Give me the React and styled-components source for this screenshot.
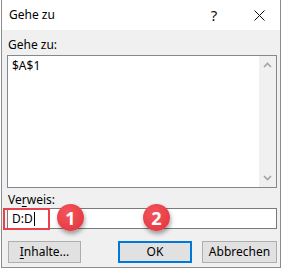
import React from 'react';
import styled, { createGlobalStyle } from 'styled-components';

const Global = createGlobalStyle`
  html, body { margin: 0; padding: 0; background: #ffffff; }
  body { font-family: "Segoe UI", "Noto Sans", "Open Sans", sans-serif; font-size: 12px; color: #000; }
`;

const Window = styled.div`
  position: relative;
  margin-left: 1px;
  width: 278px; height: 267px;
  border: 1px solid #8c8c8c; border-top: none;
  background: #f0f0f0;
  display: flex; flex-direction: column;
`;

const TitleBar = styled.div`
  height: 30px; background: #fff;
  display: flex; align-items: center;
  padding-left: 7px;
  font-size: 12px;
`;

const Title = styled.div`flex: 1; padding-bottom: 2px;`;

const TitleBtn = styled.div`
  width: ${p => p.$w}px; height: 30px;
  display: flex; align-items: center; justify-content: center;
  font-size: 15px; color: #111;
`;

const Body = styled.div`
  flex: 1;
  padding: 7px 3px 0 5px;
  display: flex; flex-direction: column;
`;

const Label = styled.div`
  margin-left: 1px;
  line-height: 16px;
  margin-bottom: ${p => p.$mb || 0}px;
  margin-top: ${p => p.$mt || 0}px;
`;

const Key = styled.span`text-decoration: underline; text-underline-offset: 2px;`;

const ListBox = styled.div`
  height: 131px;
  border: 1px solid #828790;
  background: #fff;
  display: flex;
`;

const ListItems = styled.div`
  flex: 1; padding: 2px 0 0 4px; line-height: 16px;
`;

const ScrollBar = styled.div`
  width: 17px; background: #f0f0f0;
  display: flex; flex-direction: column; justify-content: space-between; align-items: center;
  padding: 6px 0 6px;
`;

const InputWrap = styled.div`position: relative;`;

const TextBox = styled.div`
  height: 19px;
  border: 1px solid #7a7a7a;
  background: #fff;
  padding-left: 4px;
  display: flex; align-items: center;
  line-height: 16px;
`;

const Caret = styled.span`
  display: inline-block; width: 1px; height: 14px; background: #000; margin-left: 1px;
`;

const Highlight = styled.div`
  position: absolute; left: -4px; top: 0px;
  width: 43px; height: 18px;
  border: 2px solid #e8424b;
`;

const Badge = styled.div`
  position: absolute; left: ${p => p.$x}px; top: ${p => p.$y}px;
  width: 27px; height: 27px; border-radius: 50%;
  background: radial-gradient(circle at 40% 35%, #f4555c 0%, #e63c45 70%, #d8333c 100%);
  box-shadow: 1px 3px 4px rgba(0,0,0,0.35);
  color: #fff; font-weight: 700; font-size: 18px;
  font-family: "Open Sans", "Noto Sans", sans-serif;
  display: flex; align-items: center; justify-content: center;
  z-index: 2;
`;

const ButtonRow = styled.div`
  margin-top: 12px;
  display: flex; gap: 10px;
  padding-left: 1px;
`;

const Button = styled.div`
  box-sizing: border-box;
  width: ${p => p.$w || 74}px; height: 22px;
  background: #e1e1e1;
  border: ${p => (p.$default ? '2px solid #0078d7' : '1px solid #adadad')};
  display: flex; align-items: center; justify-content: center;
  padding-bottom: 1px;
  &:nth-child(2) { margin-left: auto; }
`;

const Chevron = ({ up }) => (
  <svg width="9" height="6" viewBox="0 0 9 6">
    <path d={up ? 'M1 5 L4.5 1.5 L8 5' : 'M1 1 L4.5 4.5 L8 1'} fill="none" stroke="#a3a3a3" strokeWidth="1.6" />
  </svg>
);

const CloseIcon = () => (
  <svg width="11" height="11" viewBox="0 0 11 11">
    <path d="M0.5 0.5 L10.5 10.5 M10.5 0.5 L0.5 10.5" stroke="#111" strokeWidth="1" />
  </svg>
);

export default function App() {
  return (
    <>
      <Global />
      <Window>
        <TitleBar>
          <Title>Gehe zu</Title>
          <TitleBtn $w={50}>?</TitleBtn>
          <TitleBtn $w={41}><CloseIcon /></TitleBtn>
        </TitleBar>
        <Body>
          <Label $mb={2}>Gehe zu:</Label>
          <ListBox>
            <ListItems>$A$1</ListItems>
            <ScrollBar>
              <Chevron up />
              <Chevron />
            </ScrollBar>
          </ListBox>
          <Label $mt={4}>Ve<Key>r</Key>weis:</Label>
          <InputWrap>
            <TextBox>D:D<Caret /></TextBox>
            <Highlight />
          </InputWrap>
          <ButtonRow>
            <Button $w={73}><Key>I</Key>nhalte...</Button>
            <Button $default>OK</Button>
            <Button $w={75}>Abbrechen</Button>
          </ButtonRow>
        </Body>
        <Badge $x={55} $y={204}>1</Badge>
        <Badge $x={141} $y={204}>2</Badge>
      </Window>
    </>
  );
}
